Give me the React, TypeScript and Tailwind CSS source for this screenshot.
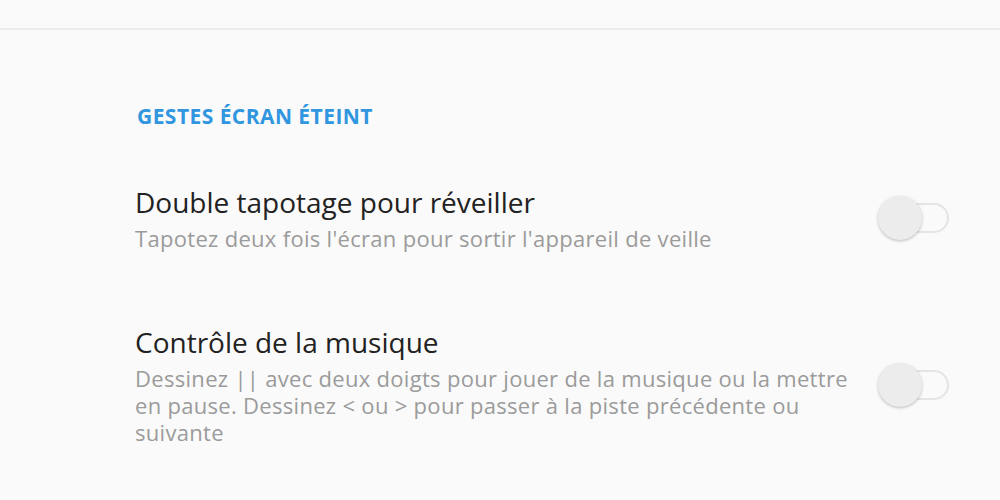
import React from "react";

function Toggle() {
  return (
    <div className="relative w-[71px] h-[46px] shrink-0">
      <div className="absolute left-[13px] top-[8px] w-[58px] h-[30px] rounded-full border-[2.5px] border-[#e4e4e4]" />
      <div className="absolute left-0 top-[1px] w-[44px] h-[44px] rounded-full bg-[#ececec] shadow-[0_1px_3px_rgba(0,0,0,0.25)]" />
    </div>
  );
}

export default function App() {
  const font = { fontFamily: '"Open Sans", "Noto Sans", sans-serif' };
  return (
    <div className="w-[1000px] h-[500px] bg-[#fafafa] overflow-hidden" style={font}>
      <div className="h-[30px] border-b-2 border-[#ececec]" />
      <div className="pl-[135px] pr-[51px]">
        <div className="pt-[71px] text-[21px] font-bold text-[#3096e0] leading-[30px] tracking-[0.45px] pl-[2px]">
          GESTES ÉCRAN ÉTEINT
        </div>
        <div className="flex items-center justify-between mt-[53px]">
          <div>
            <div className="text-[28px] text-[#222222] leading-[36px]">Double tapotage pour réveiller</div>
            <div className="text-[22px] text-[#9b9b9b] leading-[27px] mt-[5px] tracking-[0.3px]">Tapotez deux fois l'écran pour sortir l'appareil de veille</div>
          </div>
          <Toggle />
        </div>
        <div className="flex items-center justify-between mt-[72px]">
          <div className="w-[715px]">
            <div className="text-[28px] text-[#222222] leading-[36px]">Contrôle de la musique</div>
            <div className="text-[22px] text-[#9b9b9b] leading-[27px] mt-[5px] tracking-[0.3px]">
              Dessinez || avec deux doigts pour jouer de la musique ou la mettre en pause. Dessinez &lt; ou &gt; pour passer à la piste précédente ou suivante
            </div>
          </div>
          <Toggle />
        </div>
      </div>
    </div>
  );
}
